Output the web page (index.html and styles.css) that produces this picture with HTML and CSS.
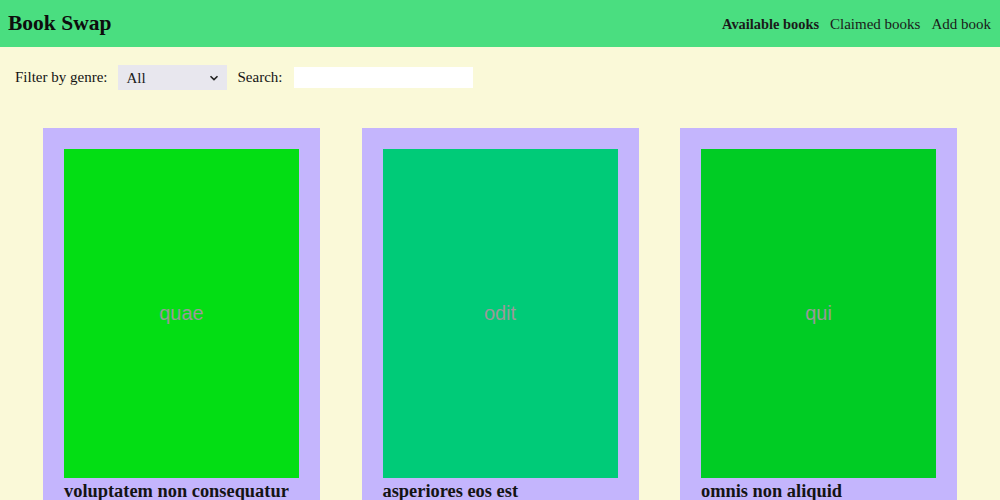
FILE: index.html
```html
<!DOCTYPE html>
<html lang="en">
<head>
<meta charset="utf-8">
<title>Book Swap</title>
<link rel="stylesheet" href="styles.css">
</head>
<body>
<header class="topbar">
  <h1 class="brand">Book Swap</h1>
  <nav class="nav">
    <a class="nav-link active" href="#">Available books</a>
    <a class="nav-link" href="#">Claimed books</a>
    <a class="nav-link" href="#">Add book</a>
  </nav>
</header>
<section class="filters">
  <label class="label" for="genre">Filter by genre:</label>
  <select id="genre" class="select"><option>All</option></select>
  <label class="label" for="search">Search:</label>
  <input id="search" class="search" type="text">
</section>
<main class="books">
  <article class="card">
    <div class="cover cover-1">quae</div>
    <h2 class="title">voluptatem non consequatur</h2>
  </article>
  <article class="card">
    <div class="cover cover-2">odit</div>
    <h2 class="title">asperiores eos est</h2>
  </article>
  <article class="card">
    <div class="cover cover-3">qui</div>
    <h2 class="title">omnis non aliquid</h2>
  </article>
</main>
</body>
</html>
```

FILE: styles.css
```css
* { box-sizing: border-box; }
html, body { margin: 0; padding: 0; }
body {
  background: #faf9d8;
  font-family: "Liberation Serif", "Times New Roman", serif;
  color: #141414;
  font-size: 15px;
  overflow: hidden;
  height: 500px;
}
.topbar {
  height: 47px;
  background: #4ade80;
  display: flex;
  align-items: center;
  justify-content: space-between;
  padding: 0 9px 0 8px;
}
.brand {
  margin: 0;
  font-size: 21.5px;
  font-weight: 700;
  color: #0d0d0d;
}
.nav {
  display: flex;
  gap: 11px;
  padding-top: 1px;
}
.nav-link {
  color: #1a1a1a;
  text-decoration: none;
  font-size: 15px;
}
.nav-link.active { font-weight: 700; font-size: 14.4px; }
.filters {
  display: flex;
  align-items: flex-start;
  gap: 10px;
  padding: 18px 15px 0 15px;
  height: 43px;
}
.label { line-height: 25px; font-size: 15px; }
.select {
  appearance: none;
  -webkit-appearance: none;
  width: 109px;
  height: 25px;
  margin-left: 1px;
  border: none;
  border-radius: 0;
  background: #e8e7ee url("data:image/svg+xml;utf8,<svg xmlns='http://www.w3.org/2000/svg' width='10' height='6' viewBox='0 0 10 6'><path d='M1.5 1.2 L5 4.6 L8.5 1.2' fill='none' stroke='%23222' stroke-width='1.6'/></svg>") no-repeat right 8px center;
  font-family: "Liberation Serif", serif;
  font-size: 15px;
  color: #1a1a1a;
  padding: 0 8px;
}
.search {
  width: 179px;
  height: 21px;
  margin-top: 2px;
  margin-left: 2px;
  border: none;
  background: #ffffff;
  padding: 0 4px;
}
.books {
  display: flex;
  justify-content: space-between;
  align-items: flex-start;
  padding: 38px 43px 0;
}
.card {
  width: 277px;
  background: #c4b5fd;
  padding: 21px 21px 12px;
}
.cover {
  height: 329px;
  display: flex;
  align-items: center;
  justify-content: center;
  font-family: "Liberation Sans", Arial, sans-serif;
  font-size: 20px;
  color: #9a9a9a;
}
.cover-1 { background: #03de14; }
.cover-2 { background: #00cb78; }
.cover-3 { background: #00cc24; }
.title {
  margin: 3px 0 0;
  font-size: 18.4px;
  font-weight: 700;
  line-height: 21px;
  color: #141414;
}
```
